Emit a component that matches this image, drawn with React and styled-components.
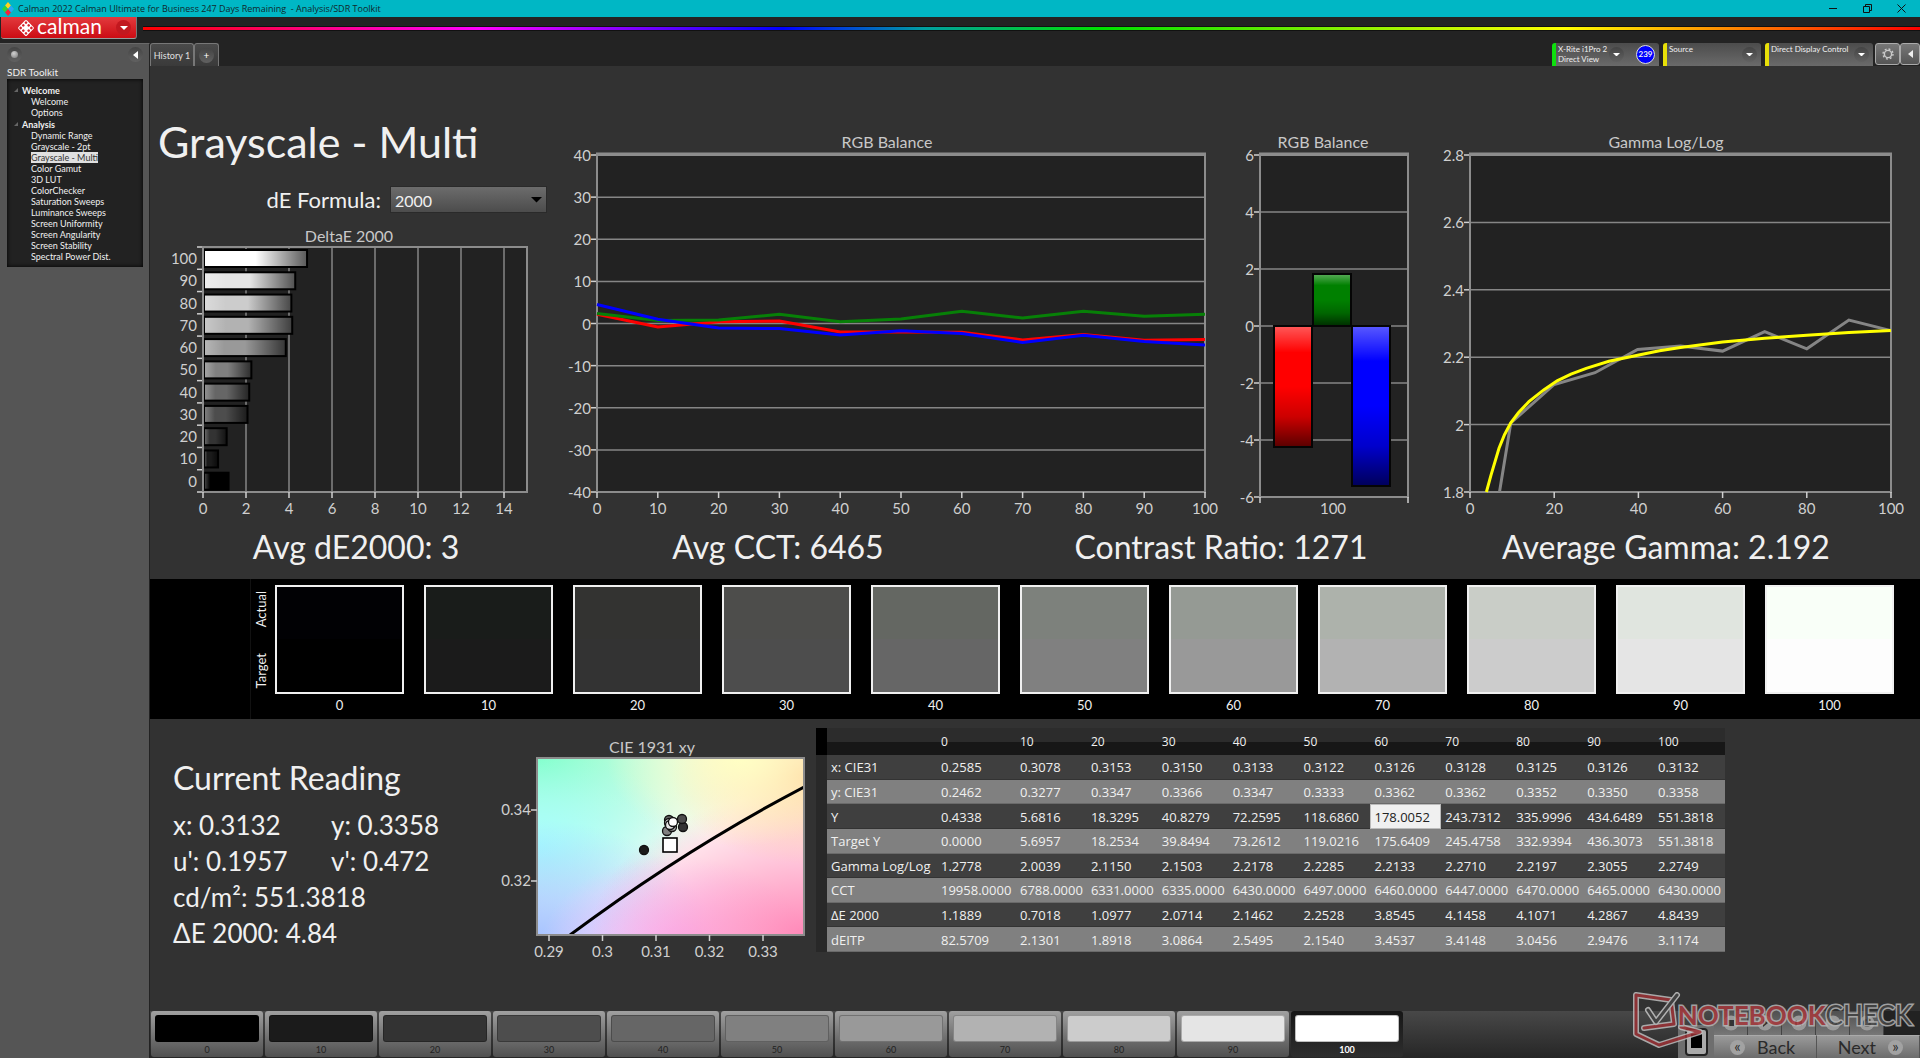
import React from 'react';
import { useState } from 'react';
import styled, { createGlobalStyle, css } from 'styled-components';

const LEVELS = [0, 10, 20, 30, 40, 50, 60, 70, 80, 90, 100];

const TREE = [
  { title: 'Welcome', items: ['Welcome', 'Options'] },
  {
    title: 'Analysis',
    items: [
      'Dynamic Range',
      'Grayscale - 2pt',
      'Grayscale - Multi',
      'Color Gamut',
      '3D LUT',
      'ColorChecker',
      'Saturation Sweeps',
      'Luminance Sweeps',
      'Screen Uniformity',
      'Screen Angularity',
      'Screen Stability',
      'Spectral Power Dist.',
    ],
  },
];

const SWATCHES = [
  { level: 0, actual: '#010104', target: '#000000' },
  { level: 10, actual: '#191c1a', target: '#1b1b1b' },
  { level: 20, actual: '#333331', target: '#333333' },
  { level: 30, actual: '#4d4d4b', target: '#4d4d4d' },
  { level: 40, actual: '#646762', target: '#666666' },
  { level: 50, actual: '#7d817c', target: '#808080' },
  { level: 60, actual: '#959a94', target: '#999999' },
  { level: 70, actual: '#adb2ab', target: '#b2b2b2' },
  { level: 80, actual: '#c9cdc7', target: '#cccccc' },
  { level: 90, actual: '#e0e5df', target: '#e5e5e5' },
  { level: 100, actual: '#f9fff8', target: '#fdfdfd' },
];

const DELTA_E = [
  { level: 100, value: 4.84, fill: '#ffffff' },
  { level: 90, value: 4.29, fill: '#e5e5e5' },
  { level: 80, value: 4.11, fill: '#cccccc' },
  { level: 70, value: 4.15, fill: '#b2b2b2' },
  { level: 60, value: 3.85, fill: '#999999' },
  { level: 50, value: 2.25, fill: '#808080' },
  { level: 40, value: 2.15, fill: '#666666' },
  { level: 30, value: 2.07, fill: '#4d4d4d' },
  { level: 20, value: 1.1, fill: '#333333' },
  { level: 10, value: 0.7, fill: '#1b1b1b' },
  { level: 0, value: 1.19, fill: '#000000' },
];

const RED = [2.2, -0.8, 0.4, 0.6, -2, -2, -2.1, -3.9, -2.6, -4, -3.8];
const GREEN = [2.4, 0.7, 0.8, 2.2, 0.4, 1.1, 2.9, 1.3, 2.9, 1.7, 2.2];
const BLUE = [4.5, 1, -1.1, -1.2, -2.7, -1.7, -2.4, -4.5, -2.8, -4.3, -5.1];

const GAMMA_TARGET = [
  [3.9, 1.8], [5, 1.85], [6.9, 1.93], [8.2, 1.97], [9.7, 2.005], [11.5, 2.035],
  [14, 2.068], [17.5, 2.103], [20.7, 2.13], [24, 2.15], [27.6, 2.167],
  [33, 2.188], [39.8, 2.206], [45, 2.219], [50, 2.229], [60, 2.245],
  [70, 2.256], [80, 2.265], [90, 2.273], [100, 2.279],
];

const GAMMA_ACTUAL = [
  [7, 1.8], [9.7, 2.005], [20, 2.119], [29.7, 2.154], [39.8, 2.223], [50, 2.233],
  [60, 2.218], [70, 2.276], [80, 2.225], [90, 2.31], [100, 2.279],
];

const READINGS = [
  ['x: CIE31', '0.2585', '0.3078', '0.3153', '0.3150', '0.3133', '0.3122', '0.3126', '0.3128', '0.3125', '0.3126', '0.3132'],
  ['y: CIE31', '0.2462', '0.3277', '0.3347', '0.3366', '0.3347', '0.3333', '0.3362', '0.3362', '0.3352', '0.3350', '0.3358'],
  ['Y', '0.4338', '5.6816', '18.3295', '40.8279', '72.2595', '118.6860', '178.0052', '243.7312', '335.9996', '434.6489', '551.3818'],
  ['Target Y', '0.0000', '5.6957', '18.2534', '39.8494', '73.2612', '119.0216', '175.6409', '245.4758', '332.9394', '436.3073', '551.3818'],
  ['Gamma Log/Log', '1.2778', '2.0039', '2.1150', '2.1503', '2.2178', '2.2285', '2.2133', '2.2710', '2.2197', '2.3055', '2.2749'],
  ['CCT', '19958.0000', '6788.0000', '6331.0000', '6335.0000', '6430.0000', '6497.0000', '6460.0000', '6447.0000', '6470.0000', '6465.0000', '6430.0000'],
  ['ΔE 2000', '1.1889', '0.7018', '1.0977', '2.0714', '2.1462', '2.2528', '3.8545', '4.1458', '4.1071', '4.2867', '4.8439'],
  ['dEITP', '82.5709', '2.1301', '1.8918', '3.0864', '2.5495', '2.1540', '3.4537', '3.4148', '3.0456', '2.9476', '3.1174'],
];

const scale = (min, max, from, to) => value =>
  from + ((value - min) / (max - min)) * (to - from);

const toPoints = (data, x, y) =>
  data.map(([a, b]) => `${x(a).toFixed(1)},${y(b).toFixed(1)}`).join(' ');

const ArrowDown = ({ size = 8 }) => (
  <svg width={size} height={size / 2} viewBox="0 0 8 4" aria-hidden="true">
    <path d="M0 0H8L4 4Z" fill="currentColor" />
  </svg>
);

const ArrowLeft = () => (
  <svg width="5" height="8" viewBox="0 0 5 8" aria-hidden="true">
    <path d="M5 0V8L0 4Z" fill="currentColor" />
  </svg>
);

const AppIcon = () => (
  <svg width="12" height="14" viewBox="0 0 12 14" aria-hidden="true">
    <path d="M6 0L9 3.5L6 7L3 3.5Z" fill="#ffd21e" />
    <path d="M3 3.5L6 7L3 10.5L0 7Z" fill="#2fd13a" />
    <path d="M9 3.5L12 7L9 10.5L6 7Z" fill="#2aa7f5" />
    <path d="M6 7L9 10.5L6 14L3 10.5Z" fill="#f0243c" />
  </svg>
);

const CalmanMark = () => (
  <svg width="18" height="18" viewBox="0 0 18 18" aria-hidden="true">
    <g transform="rotate(45 9 9)">
      <rect x="3" y="3" width="12" height="12" rx="1.5" fill="#fff" />
      {[5.2, 9, 12.8].map(x =>
        [5.2, 9, 12.8].map(y => (
          <circle
            key={`${x}-${y}`}
            cx={x}
            cy={y}
            r="1.3"
            fill={x === 9 && y === 9 ? '#fff' : '#d5202a'}
          />
        ))
      )}
    </g>
  </svg>
);

const GearIcon = () => (
  <svg width="12" height="12" viewBox="0 0 12 12" aria-hidden="true">
    <circle cx="6" cy="6" r="3.6" fill="none" stroke="#ccc" strokeWidth="1.4" />
    <circle
      cx="6"
      cy="6"
      r="5"
      fill="none"
      stroke="#ccc"
      strokeWidth="1.4"
      strokeDasharray="1.9 2.02"
    />
  </svg>
);

const YAxis = ({ ticks, y, left, right }) =>
  ticks.map(tick => (
    <g key={tick}>
      <GridLine x1={left} x2={right} y1={y(tick)} y2={y(tick)} />
      <TickLine x1={left - 6} x2={left} y1={y(tick)} y2={y(tick)} />
      <TickLabel x={left - 6} y={y(tick) + 6} textAnchor="end">
        {tick}
      </TickLabel>
    </g>
  ));

const XAxis = ({ ticks, x, bottom }) =>
  ticks.map(tick => (
    <g key={tick}>
      <TickLine x1={x(tick)} x2={x(tick)} y1={bottom} y2={bottom + 6} />
      <TickLabel x={x(tick)} y={bottom + 22} textAnchor="middle">
        {tick}
      </TickLabel>
    </g>
  ));

const DeltaChart = () => {
  const x = scale(0, 14, 53, 354);
  const band = 245 / DELTA_E.length;

  return (
    <Chart viewBox="0 0 418 300" role="img" aria-label="DeltaE 2000">
      <defs>
        <linearGradient id="barShade">
          <stop offset="0" stopColor="#fff" stopOpacity="0.3" />
          <stop offset="0.25" stopColor="#fff" stopOpacity="0" />
          <stop offset="0.5" stopColor="#000" stopOpacity="0" />
          <stop offset="1" stopColor="#000" stopOpacity="0.65" />
        </linearGradient>
      </defs>
      <ChartTitle x="199" y="20">DeltaE 2000</ChartTitle>
      <Plot x="53" y="25" width="324" height="245" />
      {[2, 4, 6, 8, 10, 12, 14].map(tick => (
        <GridLine key={tick} x1={x(tick)} x2={x(tick)} y1="25" y2="270" />
      ))}
      {DELTA_E.map((bar, i) => {
        const top = 28 + i * band;
        const shape = { x: 54, y: top, width: x(bar.value) - 54, height: 17 };
        return (
          <g key={bar.level}>
            <rect {...shape} fill={bar.fill} />
            <rect {...shape} fill="url(#barShade)" stroke="#000" strokeWidth="2" />
            <TickLabel x="47" y={top + 14} textAnchor="end">
              {bar.level}
            </TickLabel>
            <TickLine x1="47" x2="53" y1={25 + i * band} y2={25 + i * band} />
          </g>
        );
      })}
      <TickLine x1="47" x2="53" y1="270" y2="270" />
      <PlotFrame d="M53 270V25H377V270Z" />
      <XAxis ticks={[0, 2, 4, 6, 8, 10, 12, 14]} x={x} bottom={270} />
    </Chart>
  );
};

const BalanceChart = () => {
  const x = scale(0, 100, 29, 637);
  const y = scale(-40, 40, 374, 37);
  const series = values => toPoints(values.map((v, i) => [i * 10, v]), x, y);

  return (
    <Chart viewBox="0 0 652 404" role="img" aria-label="RGB Balance by level">
      <ChartTitle x="319" y="30">RGB Balance</ChartTitle>
      <Plot x="29" y="37" width="608" height="337" />
      <YAxis ticks={[40, 30, 20, 10, 0, -10, -20, -30, -40]} y={y} left={29} right={637} />
      <PlotFrame d="M29 374V37H637V374Z" />
      <PlotTop d="M28 36H638" />
      <XAxis ticks={LEVELS} x={x} bottom={374} />
      <Trace points={series(RED)} stroke="#ff0000" />
      <Trace points={series(GREEN)} stroke="#078007" />
      <Trace points={series(BLUE)} stroke="#0000ff" />
    </Chart>
  );
};

const BalanceBars = () => {
  const y = scale(-6, 6, 379, 37);

  return (
    <Chart viewBox="0 0 212 404" role="img" aria-label="RGB Balance at 100">
      <defs>
        <linearGradient id="shade" x2="0" y2="1">
          <stop offset="0" stopColor="#fff" stopOpacity="0.35" />
          <stop offset="0.22" stopColor="#fff" stopOpacity="0" />
          <stop offset="0.5" stopColor="#000" stopOpacity="0" />
          <stop offset="0.75" stopColor="#000" stopOpacity="0.2" />
          <stop offset="1" stopColor="#000" stopOpacity="0.65" />
        </linearGradient>
      </defs>
      <ChartTitle x="103" y="30">RGB Balance</ChartTitle>
      <Plot x="40" y="37" width="148" height="342" />
      <YAxis ticks={[6, 4, 2, 0, -2, -4, -6]} y={y} left={40} right={188} />
      <PlotFrame d="M40 379V37H188V379Z" />
      <PlotTop d="M39 36H189" />
      {[
        [54, 208, 121, '#ff0000'],
        [93, 156, 52, '#008000'],
        [132, 208, 160, '#0000ff'],
      ].map(([left, top, height, fill]) => (
        <g key={fill}>
          <rect x={left} y={top} width="38" height={height} fill={fill} />
          <rect x={left} y={top} width="38" height={height} fill="url(#shade)" stroke="#050505" strokeWidth="2" />
        </g>
      ))}
      <TickLine x1="40" x2="40" y1="379" y2="385" />
      <TickLine x1="188" x2="188" y1="379" y2="385" />
      <TickLabel x="113" y="396" textAnchor="middle">100</TickLabel>
    </Chart>
  );
};

const GammaChart = () => {
  const x = scale(0, 100, 38, 459);
  const y = scale(1.8, 2.8, 374, 37);

  return (
    <Chart viewBox="0 0 488 404" role="img" aria-label="Gamma Log/Log">
      <ChartTitle x="234" y="30">Gamma Log/Log</ChartTitle>
      <Plot x="38" y="37" width="421" height="337" />
      <YAxis ticks={[2.8, 2.6, 2.4, 2.2, 2, 1.8]} y={y} left={38} right={459} />
      <PlotFrame d="M38 374V37H459V374Z" />
      <PlotTop d="M37 36H460" />
      <XAxis ticks={[0, 20, 40, 60, 80, 100]} x={x} bottom={374} />
      <Trace points={toPoints(GAMMA_ACTUAL, x, y)} stroke="#858585" />
      <Trace points={toPoints(GAMMA_TARGET, x, y)} stroke="#ffff00" />
    </Chart>
  );
};

const CieChart = () => {
  const x = scale(0.29, 0.33, 49, 263);
  const y = scale(0.32, 0.34, 146, 75);

  return (
    <Chart viewBox="0 0 316 240" role="img" aria-label="CIE 1931 xy">
      <defs>
        {[
          ['green', '#80ffc8', 0, 0, 0.8],
          ['cyan', '#a4ffff', 0, 0.5, 0.55],
          ['blue', '#a8c4ff', 0, 1, 0.65],
          ['violet', '#fbbcff', 0.52, 1.05, 0.5],
          ['pink', '#ff88b8', 1, 1, 0.8],
          ['orange', '#ffcc9c', 1, 0.1, 0.5],
          ['yellow', '#ffffc4', 0.76, 0, 0.5],
        ].map(([id, color, cx, cy, r]) => (
          <radialGradient key={id} id={id} cx={cx} cy={cy} r={r} fx={cx} fy={cy}>
            <stop offset="0" stopColor={color} />
            <stop offset="1" stopColor={color} stopOpacity="0" />
          </radialGradient>
        ))}
        <clipPath id="ciePlot">
          <rect x="37" y="23" width="267" height="177" />
        </clipPath>
      </defs>
      <ChartTitle x="152" y="18">CIE 1931 xy</ChartTitle>
      <rect x="37" y="23" width="267" height="177" fill="#fffaf8" />
      {['green', 'cyan', 'blue', 'violet', 'pink', 'orange', 'yellow'].map(id => (
        <rect key={id} x="37" y="23" width="267" height="177" fill={`url(#${id})`} />
      ))}
      <path
        d="M70 200Q184 115 304 52"
        fill="none"
        stroke="#000"
        strokeWidth="3"
        clipPath="url(#ciePlot)"
      />
      <PlotFrame d="M37 200V23H304V200Z" />
      {[0.34, 0.32].map(tick => (
        <g key={tick}>
          <TickLine x1="31" x2="37" y1={y(tick)} y2={y(tick)} />
          <TickLabel x="31" y={y(tick) + 5} textAnchor="end">{tick}</TickLabel>
        </g>
      ))}
      <XAxis ticks={[0.29, 0.3, 0.31, 0.32, 0.33]} x={x} bottom={200} />
      {[
        [144, 115, '#1b1b1b'],
        [183, 92, '#333'],
        [182, 84, '#4d4d4d'],
        [169, 85, '#666'],
        [167, 96, '#808080'],
        [172, 92, '#999'],
        [171, 89, '#b2b2b2'],
        [169, 88, '#ccc'],
        [170, 90, '#e5e5e5'],
        [173, 87, '#fff'],
      ].map(([cx, cy, fill]) => (
        <circle key={fill} cx={cx} cy={cy} r="4.5" fill={fill} stroke="#111" strokeWidth="1.3" />
      ))}
      <rect x="163" y="103" width="14" height="14" fill="#fff" stroke="#000" strokeWidth="1.6" />
    </Chart>
  );
};

const App = () => {
  const [formula, setFormula] = useState('2000');
  const [level, setLevel] = useState(100);
  const [page, setPage] = useState('Grayscale - Multi');

  return (
    <Shell>
      <GlobalStyle />
      <TitleBar>
        <AppIcon />
        <WindowTitle>
          {'Calman 2022 Calman Ultimate for Business 247 Days Remaining  - Analysis/SDR Toolkit'}
        </WindowTitle>
        <WindowButton aria-label="Minimize">
          <svg width="9" height="9"><path d="M0 4.5H8" stroke="#111" /></svg>
        </WindowButton>
        <WindowButton aria-label="Restore">
          <svg width="9" height="9">
            <path d="M.5 2.5H6.5V8.5H.5ZM2.5 2.5V.5H8.5V6.5H6.5" fill="none" stroke="#111" />
          </svg>
        </WindowButton>
        <WindowButton aria-label="Close">
          <svg width="9" height="9"><path d="M.5 .5L8.5 8.5M8.5 .5L.5 8.5" stroke="#111" /></svg>
        </WindowButton>
      </TitleBar>

      <BrandRow>
        <BrandButton>
          <CalmanMark />
          <BrandName>calman</BrandName>
          <BrandKnob><ArrowDown /></BrandKnob>
        </BrandButton>
        <Rainbow />
      </BrandRow>

      <Body>
        <Sidebar>
          <SidebarTop>
            <Knob as="span"><Dot /></Knob>
            <Knob aria-label="Collapse sidebar"><ArrowLeft /></Knob>
          </SidebarTop>
          <SidebarTitle>SDR Toolkit</SidebarTitle>
          <Tree aria-label="SDR Toolkit">
            {TREE.map(group => (
              <React.Fragment key={group.title}>
                <TreeHeading>
                  <svg width="4" height="4" aria-hidden="true"><path d="M4 0V4H0Z" fill="#666" /></svg>
                  {group.title}
                </TreeHeading>
                {group.items.map(item => (
                  <TreeLink
                    key={item}
                    href="#"
                    $active={item === page}
                    onClick={() => setPage(item)}
                  >
                    {item}
                  </TreeLink>
                ))}
              </React.Fragment>
            ))}
          </Tree>
        </Sidebar>

        <Main>
          <TabRow>
            <Tab>History 1</Tab>
            <Tab $add aria-label="Add history"><Knob as="span">+</Knob></Tab>
            <Devices>
              <Device $accent="#0ee00e" $size={107}>
                <DeviceName>X-Rite i1Pro 2<br />Direct View</DeviceName>
                <Knob aria-label="Meter menu"><ArrowDown size={7} /></Knob>
                <Badge>239</Badge>
              </Device>
              <Device $accent="#e8e008" $size={98}>
                <DeviceName>Source</DeviceName>
                <Knob aria-label="Source menu"><ArrowDown size={7} /></Knob>
              </Device>
              <Device $accent="#e8e008" $size={108}>
                <DeviceName>Direct Display Control</DeviceName>
                <Knob aria-label="Display menu"><ArrowDown size={7} /></Knob>
              </Device>
              <ToolButton aria-label="Settings"><GearIcon /></ToolButton>
              <ToolButton aria-label="Collapse panel" $last><ArrowLeft /></ToolButton>
            </Devices>
          </TabRow>

          <Charts>
            <div>
              <PageTitle>Grayscale - Multi</PageTitle>
              <FormulaRow>
                <label htmlFor="formula">dE Formula:</label>
                <SelectWrap>
                  <Select
                    id="formula"
                    value={formula}
                    onChange={e => setFormula(e.target.value)}
                  >
                    <option>2000</option>
                    <option>1994</option>
                    <option>1976</option>
                  </Select>
                  <ArrowDown size={11} />
                </SelectWrap>
              </FormulaRow>
              <DeltaChart />
            </div>
            <BalanceChart />
            <BalanceBars />
            <GammaChart />
          </Charts>

          <Stats>
            <span>Avg dE2000: 3</span>
            <span>Avg CCT: 6465</span>
            <span>Contrast Ratio: 1271</span>
            <span>Average Gamma: 2.192</span>
          </Stats>

          <Strip>
            <StripPad />
            <StripLabels>
              <span>Actual</span>
              <span>Target</span>
            </StripLabels>
            <SwatchList>
              {SWATCHES.map(swatch => (
                <li key={swatch.level}>
                  <Swatch $actual={swatch.actual} $target={swatch.target} />
                  {swatch.level}
                </li>
              ))}
            </SwatchList>
          </Strip>

          <Lower>
            <Reading>
              <h2>Current Reading</h2>
              <ReadingGrid>
                <span>x: 0.3132</span>
                <span>y: 0.3358</span>
                <span>u': 0.1957</span>
                <span>v': 0.472</span>
                <Wide>cd/m²: 551.3818</Wide>
                <Wide>ΔE 2000: 4.84</Wide>
              </ReadingGrid>
            </Reading>
            <CieBox><CieChart /></CieBox>
            <Table>
              <colgroup>
                <col width="11" />
                <col width="110" />
                <col width="79" />
              </colgroup>
              <thead>
                <tr>
                  <Gutter />
                  <td />
                  {LEVELS.map(item => (
                    <th key={item} scope="col">{item}</th>
                  ))}
                </tr>
              </thead>
              <tbody>
                {READINGS.map(([name, ...values]) => (
                  <tr key={name}>
                    <Gutter />
                    <th scope="row">{name}</th>
                    {values.map((value, i) => (
                      <Cell key={i} $selected={name === 'Y' && i === 6}>{value}</Cell>
                    ))}
                  </tr>
                ))}
              </tbody>
            </Table>
          </Lower>

          <Footer>
            {SWATCHES.map(swatch => (
              <Patch
                key={swatch.level}
                $active={swatch.level === level}
                onClick={() => setLevel(swatch.level)}
              >
                <PatchColor $color={swatch.level === 100 ? '#ffffff' : swatch.target} />
                {swatch.level}
              </Patch>
            ))}
            <Transport>
              <StopButton aria-label="Pattern window">
                <svg width="23" height="28" viewBox="0 0 23 28">
                  <rect x="1" y="1" width="21" height="26" rx="3" fill="#aaa" stroke="#222" strokeWidth="2" />
                  <rect x="6" y="6" width="11" height="14" fill="#000" />
                </svg>
              </StopButton>
              <MiniRow>
                {[
                  ['Stop', 'M5 5H11V11H5Z'],
                  ['Play', 'M6 4L11 8L6 12Z'],
                  ['Step', 'M4 5H6V11H4ZM7 8L11 5V11Z'],
                  ['Loop', 'M3 8A2 2 0 0 1 7 8A2 2 0 0 0 12 8H11A1 1 0 0 1 8 8A2 2 0 0 0 3 8Z'],
                  ['Refresh', 'M8 4A4 4 0 1 0 12 8H10A2 2 0 1 1 8 6V8L12 5L8 2Z'],
                ].map(([name, d]) => (
                  <MiniButton key={name} aria-label={name}>
                    <svg width="16" height="16">
                      <circle cx="8" cy="8" r="7.500" fill="#9a9a9a" />
                      <path d={d} fill="#333" />
                    </svg>
                  </MiniButton>
                ))}
              </MiniRow>
              <StepButton><Chevron>«</Chevron>Back</StepButton>
              <StepButton $end>Next<Chevron>»</Chevron></StepButton>
            </Transport>
            <Watermark>
              <svg width="70" height="56" viewBox="0 0 70 56" aria-hidden="true">
                <g fill="none" strokeLinejoin="round" strokeLinecap="round">
                  <path d="M38 8L3 3L3 42L26 53L67 40L48 35M38 8L41 32L11 36" stroke="#bdbdbd" strokeWidth="6" />
                  <path d="M38 8L3 3L3 42L26 53L67 40L48 35M38 8L41 32L11 36" stroke="#9c3236" strokeWidth="3" />
                  <path d="M15 18L23 30L44 3" stroke="#c4c4c4" strokeWidth="6" />
                  <path d="M15 18L23 30L44 3" stroke="#444" strokeWidth="3" />
                </g>
              </svg>
              <WatermarkText><b>NOTEBOOK</b>CHECK</WatermarkText>
            </Watermark>
          </Footer>
        </Main>
      </Body>
    </Shell>
  );
};

export default App;

const GlobalStyle = createGlobalStyle`
  * {
    box-sizing: border-box;
  }

  body {
    margin: 0;
    background: #232323;
    color: #f0f0f0;
    font-family: Lato, 'Open Sans', sans-serif;
  }

  button, select {
    border: 0;
    padding: 0;
    background: none;
    color: inherit;
    font: inherit;
  }

  h1, h2, ul {
    margin: 0;
    padding: 0;
    font-weight: 400;
    list-style: none;
  }
`;

const Shell = styled.div`
  display: flex;
  flex-direction: column;
  min-height: 100vh;
  overflow: hidden;
`;

const TitleBar = styled.header`
  display: flex;
  align-items: center;
  height: 17px;
  padding: 0 14px 0 2px;
  background: #00b7c5;
`;

const WindowTitle = styled.span`
  flex: 1;
  padding-left: 4px;
  color: #10282c;
  font: 9px 'Open Sans', 'Noto Sans', sans-serif;
  white-space: pre;
`;

const WindowButton = styled.button`
  display: flex;
  width: 9px;
  margin-left: 25px;
`;

const BrandRow = styled.div`
  display: flex;
  align-items: flex-start;
  gap: 6px;
  height: 26px;
  padding-left: 1px;
`;

const BrandButton = styled.button`
  display: flex;
  align-items: center;
  width: 136px;
  height: 22px;
  padding-left: 16px;
  border-bottom: 1px solid #9a9a9a;
  border-right: 1px solid #777;
  border-radius: 0 0 3px 3px;
  background: linear-gradient(#e23a3d, #cc0c14);
  color: #fff;
`;

const BrandName = styled.span`
  width: 81px;
  padding: 0 0 3px 2px;
  font-size: 21px;
  line-height: 18px;
  text-align: left;
`;

const BrandKnob = styled.span`
  display: flex;
  align-items: center;
  justify-content: center;
  width: 15px;
  height: 15px;
  border-radius: 50%;
  background: #c2181f;
`;

const Rainbow = styled.div`
  flex: 1;
  height: 5px;
  margin-top: 9px;
  border: solid #111;
  border-width: 1px 0;
  background: linear-gradient(
    90deg,
    #ff0000,
    #ff00ff 19%,
    #0000ff 36%,
    #00a0a0 44%,
    #00e000 54%,
    #ffff00 80%,
    #ff0000
  );
`;

const Body = styled.div`
  flex: 1;
  display: flex;
`;

const Sidebar = styled.aside`
  flex: none;
  width: 150px;
  padding: 3px 6px 3px 7px;
  border-top: 1px solid #6a6a6a;
  border-right: 1px solid #222;
  background: #555;
`;

const SidebarTop = styled.div`
  display: flex;
  justify-content: space-between;
`;

const Knob = styled.button`
  flex: none;
  display: flex;
  align-items: center;
  justify-content: center;
  width: 15px;
  height: 15px;
  border-radius: 50%;
  background: linear-gradient(#444, #616161);
  color: #fff;
  font-size: 10px;
`;

const Dot = styled.i`
  width: 7px;
  height: 7px;
  border-radius: 50%;
  background: radial-gradient(circle at 40% 35%, #d0d0d0, #777);
`;

const SidebarTitle = styled.div`
  height: 17px;
  font-size: 10px;
  line-height: 20px;
`;

const Tree = styled.nav`
  display: flex;
  flex-direction: column;
  align-items: flex-start;
  padding: 5px 0 5px 7px;
  background: #222;
  box-shadow: inset 0 0 4px #000;
  font-size: 9px;
  line-height: 11px;
`;

const TreeHeading = styled.div`
  display: flex;
  align-items: center;
  gap: 4px;
  height: 12px;
  font-weight: 700;
`;

const TreeLink = styled.a`
  margin-left: 17px;
  color: inherit;
  text-decoration: none;

  ${props =>
    props.$active &&
    css`
      background: #e0e0e0;
      color: #333;
    `}
`;

const Main = styled.main`
  flex: 1;
  display: flex;
  flex-direction: column;
  min-width: 0;
  background: #323232;
`;

const TabRow = styled.div`
  display: flex;
  align-items: flex-end;
  height: 23px;
  background: #232323;
`;

const Tab = styled.button`
  display: flex;
  align-items: center;
  justify-content: center;
  width: ${props => (props.$add ? 25 : 44)}px;
  height: 23px;
  border: 1px solid #777;
  border-bottom: 0;
  border-radius: 3px 3px 0 0;
  background: linear-gradient(#4a4a4a, #3a3a3a);
  color: #e0e0e0;
  font-size: 9px;
`;

const Devices = styled.div`
  display: flex;
  gap: 4px;
  height: 23px;
  margin-left: auto;
`;

const Device = styled.div`
  display: flex;
  align-items: center;
  width: ${props => props.$size}px;
  padding-right: 4px;
  border-left: 4px solid ${props => props.$accent};
  border-radius: 3px 3px 0 0;
  background: linear-gradient(#4c4c4c, #6a6a6a);
`;

const DeviceName = styled.span`
  flex: 1;
  align-self: flex-start;
  padding: 1px 0 0 2px;
  font-size: 8px;
  line-height: 10px;
  white-space: nowrap;
`;

const Badge = styled.span`
  flex: none;
  width: 19px;
  height: 19px;
  margin-left: 12px;
  border: 1px solid #ddd;
  border-radius: 50%;
  background: #0000ff;
  font-size: 8px;
  font-weight: 700;
  line-height: 17px;
  text-align: center;
`;

const ToolButton = styled.button`
  display: flex;
  align-items: center;
  justify-content: center;
  width: ${props => (props.$last ? 20 : 25)}px;
  height: 22px;
  margin-left: ${props => (props.$last ? -4 : -2)}px;
  border: 1px solid #aaa;
  border-radius: 3px;
  background: linear-gradient(#777, #555);
  color: #eee;
`;

const Charts = styled.section`
  display: grid;
  grid-template-columns:
    minmax(0, 418fr) minmax(0, 652fr) minmax(0, 212fr)
    minmax(0, 488fr);
  padding-top: 52px;
`;

const PageTitle = styled.h1`
  padding-left: 8px;
  font-size: 43px;
  line-height: 48px;
`;

const FormulaRow = styled.div`
  display: flex;
  align-items: center;
  justify-content: flex-end;
  gap: 9px;
  margin: 20px 21px 9px 0;
  font-size: 22px;
  line-height: 27px;
`;

const SelectWrap = styled.div`
  position: relative;
  color: #000;

  svg {
    position: absolute;
    top: 11px;
    right: 5px;
    pointer-events: none;
  }
`;

const Select = styled.select`
  display: block;
  width: 157px;
  height: 27px;
  padding: 0 4px;
  border: 1px solid #2a2a2a;
  background: linear-gradient(#6c6c6c, #4c4c4c);
  color: #f0f0f0;
  font-size: 16px;
  appearance: none;
`;

const Chart = styled.svg`
  display: block;
  width: 100%;
  height: auto;
`;

const ChartTitle = styled.text`
  fill: #c8c8c8;
  font-size: 16px;
  text-anchor: middle;
`;

const TickLabel = styled.text`
  fill: #cfcfcf;
  font-size: 15px;
`;

const Plot = styled.rect`
  fill: #222;
`;

const PlotFrame = styled.path`
  fill: none;
  stroke: #8c8c8c;
  stroke-width: 2;
`;

const PlotTop = styled.path`
  stroke: #8c8c8c;
  stroke-width: 3;
`;

const GridLine = styled.line`
  stroke: #868686;
  stroke-width: 1.5;
`;

const TickLine = styled.line`
  stroke: #d0d0d0;
  stroke-width: 1.5;
`;

const Trace = styled.polyline`
  fill: none;
  stroke-width: 3;
`;

const Stats = styled.section`
  display: grid;
  grid-template-columns: 412fr 432fr 454fr 436fr;
  padding: 6px 36px 13px 0;
  font-size: 32px;
  line-height: 38px;
  text-align: center;
`;

const Strip = styled.section`
  display: flex;
  padding: 6px 26px 0 0;
  height: 140px;
  background: #000;
`;

const StripPad = styled.div`
  width: 101px;
  margin-top: -6px;
  border-right: 1px solid #111;
`;

const StripLabels = styled.div`
  display: flex;
  justify-content: space-between;
  width: 24px;
  height: 109px;
  padding: 6px 0;
  font-size: 13px;
  line-height: 20px;
  flex-direction: column;

  span {
    writing-mode: vertical-rl;
    rotate: 180deg;
  }
`;

const SwatchList = styled.ul`
  flex: 1;
  display: grid;
  grid-template-columns: repeat(11, 1fr);
  gap: 20px;
  font-size: 13px;
  line-height: 22px;
  text-align: center;
`;

const Swatch = styled.div`
  height: 109px;
  border: 2px solid #f0f0f0;
  background: linear-gradient(
    ${props => props.$actual} 50%,
    ${props => props.$target} 50%
  );
`;

const Lower = styled.section`
  flex: 1;
  display: grid;
  grid-template-columns:
    minmax(0, 350fr) minmax(0, 316fr) minmax(0, 909fr)
    minmax(0, 195fr);
  align-items: start;
`;

const Reading = styled.div`
  padding: 39px 0 0 23px;
  font-size: 26px;
  line-height: 36px;

  h2 {
    margin-bottom: 9px;
    font-size: 32px;
    line-height: 40px;
  }
`;

const ReadingGrid = styled.div`
  display: grid;
  grid-template-columns: 158px 1fr;
`;

const Wide = styled.span`
  grid-column: 1 / -1;
`;

const CieBox = styled.div`
  padding-top: 16px;
`;

const Table = styled.table`
  width: 100%;
  height: 224px;
  margin-top: 9px;
  border-collapse: collapse;
  table-layout: fixed;
  font: 13px 'Open Sans', 'Noto Sans', sans-serif;
  line-height: 16px;

  th,
  td {
    padding: 0 0 0 4px;
    font-weight: 400;
    text-align: left;
    white-space: nowrap;
  }

  thead tr {
    height: 27px;
    background: linear-gradient(#2c2c2c 50%, #171717 50%);
    font-size: 12px;
  }

  tbody tr {
    background: #3f3f3f;
    box-shadow: inset 0 -1px #333;
  }

  tbody tr:nth-child(even) {
    background: #808080;
    box-shadow: inset 0 -1px #6a6a6a;
  }
`;

const Gutter = styled.td`
  background: #282828;

  thead & {
    background: #000;
  }
`;

const Cell = styled.td`
  ${props =>
    props.$selected &&
    css`
      background: #f0f0f0;
      box-shadow: inset 0 0 0 1px #bbb;
      color: #222;
    `}
`;

const Footer = styled.footer`
  position: relative;
  display: flex;
  height: 47px;
  background: linear-gradient(#484848, #262626);
`;

const Patch = styled.button`
  display: flex;
  flex-direction: column;
  width: 112px;
  height: 46px;
  margin: 0 1px;
  padding: 4px 4px 0;
  border-radius: 3px;
  background: linear-gradient(#a0a0a0, #6e6e6e 60%, #505050);
  color: #222;
  font-size: 9px;
  line-height: 15px;
  align-items: center;

  ${props =>
    props.$active &&
    css`
      background: linear-gradient(#161616, #2e2e2e);
      color: #fff;
      font-weight: 700;
    `}
`;

const PatchColor = styled.span`
  width: 100%;
  height: 28px;
  border: 1px solid rgba(0, 0, 0, 0.25);
  border-radius: 3px;
  background: ${props => props.$color};
`;

const Transport = styled.div`
  display: grid;
  grid-template: 24px 23px / 36px 103px 103px;
  margin-left: auto;
`;

const StopButton = styled.button`
  grid-row: 1 / 3;
  align-self: end;
  display: flex;
  align-items: center;
  justify-content: center;
  height: 33px;
  background: #6e6e6e;
`;

const MiniRow = styled.div`
  grid-column: 2 / 4;
  display: flex;
  padding-right: 36px;
  background: #222;
`;

const MiniButton = styled.button`
  display: flex;
  align-items: center;
  justify-content: center;
  width: 34px;
  border-right: 1px solid #444;
  background: linear-gradient(#505050, #777);
`;

const StepButton = styled.button`
  display: flex;
  align-items: center;
  justify-content: ${props => (props.$end ? 'flex-end' : 'flex-start')};
  gap: 12px;
  padding: 0 16px;
  border-top: 1px solid #aaa;
  border-right: 1px solid #555;
  background: linear-gradient(#9a9a9a, #6c6c6c);
  color: #2a2a2a;
  font-size: 18px;
`;

const Chevron = styled.span`
  width: 15px;
  height: 15px;
  border-radius: 50%;
  background: #a2a2a2;
  font-size: 15px;
  line-height: 12px;
  text-align: center;
`;

const Watermark = styled.div`
  position: absolute;
  right: 8px;
  bottom: 10px;
  display: flex;
  opacity: 0.85;
  pointer-events: none;
`;

const WatermarkText = styled.span`
  margin: 6px 0 0 -25px;
  color: #444;
  font-size: 26px;
  line-height: 34px;
  -webkit-text-stroke: 3px #b4b4b4;
  paint-order: stroke fill;

  b {
    color: #a83a3e;
  }
`;
